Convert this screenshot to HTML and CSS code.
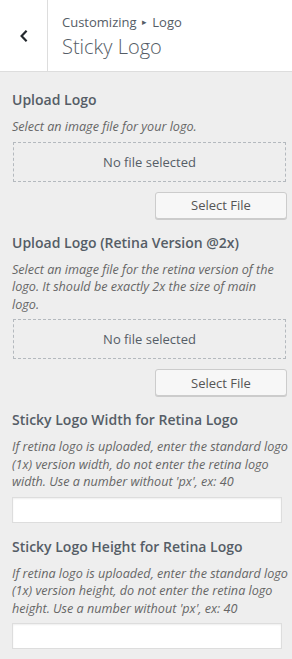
FILE: index.html
```html
<!DOCTYPE html>
<html lang="en">
<head>
<meta charset="UTF-8" />
<meta name="viewport" content="width=device-width, initial-scale=1" />
<title>Sticky Logo</title>
<link rel="stylesheet" href="styles.css">
</head>
<body>
<div class="panel-header">
  <button class="back-btn" aria-label="Back">
    <svg width="10" height="14" viewBox="0 0 10 14"><path d="M7.6 1.8 L2.6 7 L7.6 12.2" fill="none" stroke="#23282d" stroke-width="2.2"/></svg>
  </button>
  <div class="panel-title">
    <span class="crumb">Customizing <span class="sep">&#9656;</span> Logo</span>
    <h2>Sticky Logo</h2>
  </div>
</div>

<div class="controls">
  <div class="control">
    <span class="control-title">Upload Logo</span>
    <span class="control-desc">Select an image file for your logo.</span>
    <div class="placeholder">No file selected</div>
    <div class="actions"><button class="select-btn">Select File</button></div>
  </div>

  <div class="control">
    <span class="control-title">Upload Logo (Retina Version @2x)</span>
    <span class="control-desc narrow">Select an image file for the retina version of the logo. It should be exactly 2x the size of main logo.</span>
    <div class="placeholder">No file selected</div>
    <div class="actions"><button class="select-btn">Select File</button></div>
  </div>

  <div class="control">
    <span class="control-title">Sticky Logo Width for Retina Logo</span>
    <span class="control-desc">If retina logo is uploaded, enter the standard logo (1x) version width, do not enter the retina logo width. Use a number without 'px', ex: 40</span>
    <input type="text" class="text-input" />
  </div>

  <div class="control">
    <span class="control-title">Sticky Logo Height for Retina Logo</span>
    <span class="control-desc">If retina logo is uploaded, enter the standard logo (1x) version height, do not enter the retina logo height. Use a number without 'px', ex: 40</span>
    <input type="text" class="text-input" />
  </div>
</div>
</body>
</html>
```

FILE: styles.css
```css
html {
  overflow: hidden;
}
body {
  margin: 0;
  background: #eee;
  font-family: 'Open Sans', 'Noto Sans', sans-serif;
  color: #555d66;
}
.panel-header {
  display: flex;
  height: 71px;
  background: #fff;
  border-bottom: 1px solid #ddd;
}
.back-btn {
  width: 48px;
  height: 71px;
  padding: 0;
  background: #fff;
  border: none;
  border-right: 1px solid #ddd;
  display: flex;
  align-items: center;
  justify-content: center;
}
.panel-title {
  padding: 12px 0 0 14px;
}
.crumb {
  display: block;
  font-size: 13px;
  line-height: 20px;
  color: #555d66;
}
.sep {
  font-size: 9px;
  vertical-align: 2px;
  margin: 0 2px;
}
.panel-title h2 {
  margin: 0;
  font-size: 20px;
  font-weight: 300;
  line-height: 30px;
  color: #555d66;
}
.controls {
  padding: 18px 5px 0 12px;
}
.control {
  margin-bottom: 14px;
}
.control:last-child {
  margin-bottom: 0;
}
.control-title {
  display: block;
  font-size: 14px;
  font-weight: 600;
  line-height: 20px;
  margin-bottom: 8px;
  color: #555d66;
}
.control-desc {
  display: block;
  font-size: 12.6px;
  font-style: italic;
  line-height: 17.5px;
  margin: 0 -3px 6px 0;
  color: #666;
}
.control-desc.narrow {
  padding-right: 12px;
}
.placeholder {
  margin: 0 1px;
  height: 38px;
  border: 1px dashed #b4b9be;
  display: flex;
  align-items: center;
  justify-content: center;
  font-size: 13px;
  color: #555d66;
}
.actions {
  display: flex;
  justify-content: flex-end;
  margin-top: 10px;
}
.select-btn {
  width: 132px;
  height: 27px;
  background: #f7f7f7;
  border: 1px solid #ccc;
  border-radius: 3px;
  box-shadow: 0 1px 0 #ccc;
  font-family: inherit;
  font-size: 13px;
  color: #555;
  padding: 0;
}
.text-input {
  display: block;
  box-sizing: border-box;
  width: 270px;
  height: 26px;
  margin: 0;
  border: 1px solid #ddd;
  background: #fff;
  box-shadow: inset 0 1px 2px rgba(0, 0, 0, 0.07);
}
```
